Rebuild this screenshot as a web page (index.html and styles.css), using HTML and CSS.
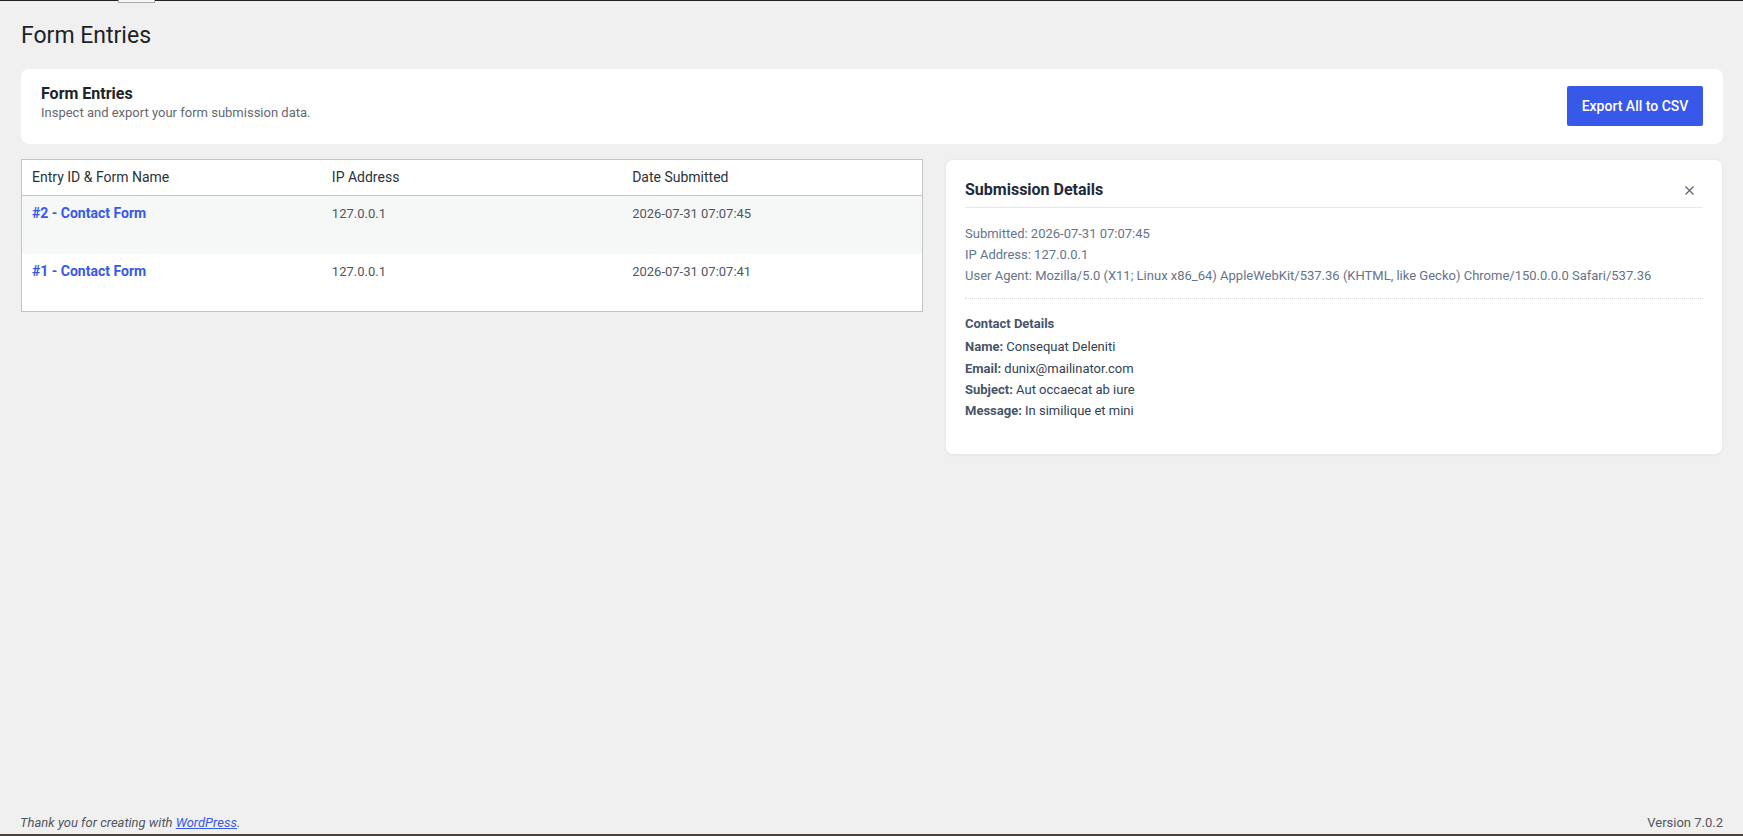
FILE: index.html
```html
<!DOCTYPE html>
<html lang="en">
<head>
<meta charset="utf-8">
<title>Form Entries</title>
<link rel="stylesheet" href="styles.css">
</head>
<body>
<div class="topline"></div>
<div class="top-tab"></div>
<div class="page">
  <main class="wrap">
    <h1 class="page-title">Form Entries</h1>

    <section class="intro-card">
      <div class="intro-text">
        <h2 class="intro-title">Form Entries</h2>
        <p class="intro-sub">Inspect and export your form submission data.</p>
      </div>
      <button class="btn-export" type="button">Export All to CSV</button>
    </section>

    <div class="content-grid">
      <table class="entries">
        <thead>
          <tr>
            <th>Entry ID &amp; Form Name</th>
            <th>IP Address</th>
            <th>Date Submitted</th>
          </tr>
        </thead>
        <tbody>
          <tr class="alt">
            <td><a class="entry-link" href="#">#2 - Contact Form</a></td>
            <td>127.0.0.1</td>
            <td>2026-07-31 07:07:45</td>
          </tr>
          <tr>
            <td><a class="entry-link" href="#">#1 - Contact Form</a></td>
            <td>127.0.0.1</td>
            <td>2026-07-31 07:07:41</td>
          </tr>
        </tbody>
      </table>

      <aside class="details">
        <div class="details-head">
          <h3 class="details-title">Submission Details</h3>
          <button class="close-btn" type="button" aria-label="Close">
            <svg width="9" height="9" viewBox="0 0 9 9"><path d="M0.5 0.5 L8.5 8.5 M8.5 0.5 L0.5 8.5" stroke="#5b6475" stroke-width="1.2" fill="none"/></svg>
          </button>
        </div>
        <div class="meta">
          <div>Submitted: 2026-07-31 07:07:45</div>
          <div>IP Address: 127.0.0.1</div>
          <div>User Agent: Mozilla/5.0 (X11; Linux x86_64) AppleWebKit/537.36 (KHTML, like Gecko) Chrome/150.0.0.0 Safari/537.36</div>
        </div>
        <div class="fields">
          <div class="fields-title">Contact Details</div>
          <div><strong>Name:</strong> Consequat Deleniti</div>
          <div><strong>Email:</strong> dunix@mailinator.com</div>
          <div><strong>Subject:</strong> Aut occaecat ab iure</div>
          <div><strong>Message:</strong> In similique et mini</div>
        </div>
      </aside>
    </div>
  </main>

  <footer class="footer">
    <span class="thanks">Thank you for creating with <a href="#">WordPress</a>.</span>
    <span class="version">Version 7.0.2</span>
  </footer>
</div>
</body>
</html>
```

FILE: styles.css
```css
* { box-sizing: border-box; }

html, body {
  margin: 0;
  padding: 0;
  height: 100%;
}

body {
  background: #f0f0f1;
  font-family: Roboto, "Liberation Sans", sans-serif;
  color: #3c434a;
  font-size: 13px;
}

.topline {
  height: 1px;
  background: #1d2327;
}

.top-tab {
  position: absolute;
  top: 0;
  left: 118px;
  width: 37px;
  height: 3px;
  border: 1px solid #a7aaad;
  border-top: none;
  background: #f6f7f7;
}

.page {
  height: calc(100% - 1px);
  display: flex;
  flex-direction: column;
  border-bottom: 2px solid #4a4541;
}

.wrap {
  flex: 1;
  padding: 0 20px 0 21px;
}

.page-title {
  margin: 20px 0 18px;
  font-size: 23px;
  font-weight: 400;
  line-height: 30px;
  color: #1d2327;
}

.intro-card {
  background: #fff;
  border-radius: 8px;
  padding: 15px 20px 18px 20px;
  display: flex;
  justify-content: space-between;
  align-items: flex-start;
}

.intro-title {
  margin: 0;
  font-size: 16px;
  line-height: 20px;
  font-weight: 700;
  color: #1d2327;
}

.intro-sub {
  margin: 0;
  font-size: 13px;
  line-height: 18px;
  color: #646970;
}

.btn-export {
  margin-top: 2px;
  width: 136px;
  height: 40px;
  border: none;
  border-radius: 2px;
  background: #3858e9;
  color: #fff;
  font-family: inherit;
  font-size: 14px;
  font-weight: 500;
  cursor: pointer;
}

.content-grid {
  margin-top: 15px;
  display: grid;
  grid-template-columns: 902fr 778fr;
  gap: 22px;
  align-items: start;
}

.entries {
  width: 100%;
  border-collapse: collapse;
  table-layout: fixed;
  background: #fff;
  border: 1px solid #c3c4c7;
}

.entries th {
  text-align: left;
  font-weight: 400;
  font-size: 14px;
  line-height: 19px;
  padding: 8px 10px;
  color: #2c3338;
  border-bottom: 1px solid #c3c4c7;
}

.entries td {
  vertical-align: top;
  height: 58px;
  padding: 8px 10px;
  font-size: 13px;
  line-height: 19px;
  color: #50575e;
}

.entries tr.alt td {
  background: #f6f7f7;
}

.entry-link {
  color: #3858e9;
  font-weight: 700;
  font-size: 14px;
  text-decoration: none;
}

.details {
  background: #fff;
  border-radius: 8px;
  border: 1px solid #e8ebef;
  box-shadow: 0 1px 2px rgba(0, 0, 0, 0.04);
  padding: 18px 19px 33px;
}

.details-head {
  display: flex;
  justify-content: space-between;
  align-items: center;
  padding-bottom: 5px;
  border-bottom: 1px solid #e2e8f0;
}

.details-title {
  margin: 0;
  font-size: 16px;
  line-height: 24px;
  font-weight: 700;
  color: #1e293b;
}

.close-btn {
  background: none;
  border: none;
  padding: 0;
  margin-right: 9px;
  width: 9px;
  height: 9px;
  display: flex;
  cursor: pointer;
}

.meta {
  padding: 15px 0 12px;
  border-bottom: 1px dotted #d5dae1;
  color: #64748b;
  font-size: 13px;
  line-height: 21px;
}

.fields {
  padding-top: 14px;
  color: #334155;
  font-size: 13px;
  line-height: 21.3px;
}

.fields-title {
  font-weight: 700;
  color: #475569;
  margin-bottom: 2px;
}

.fields strong {
  color: #475569;
}

.footer {
  display: flex;
  justify-content: space-between;
  padding: 0 20px 1px 20px;
  font-size: 13px;
  line-height: 20px;
  color: #50575e;
}

.thanks {
  font-style: italic;
}

.thanks a {
  color: #3858e9;
}
```
